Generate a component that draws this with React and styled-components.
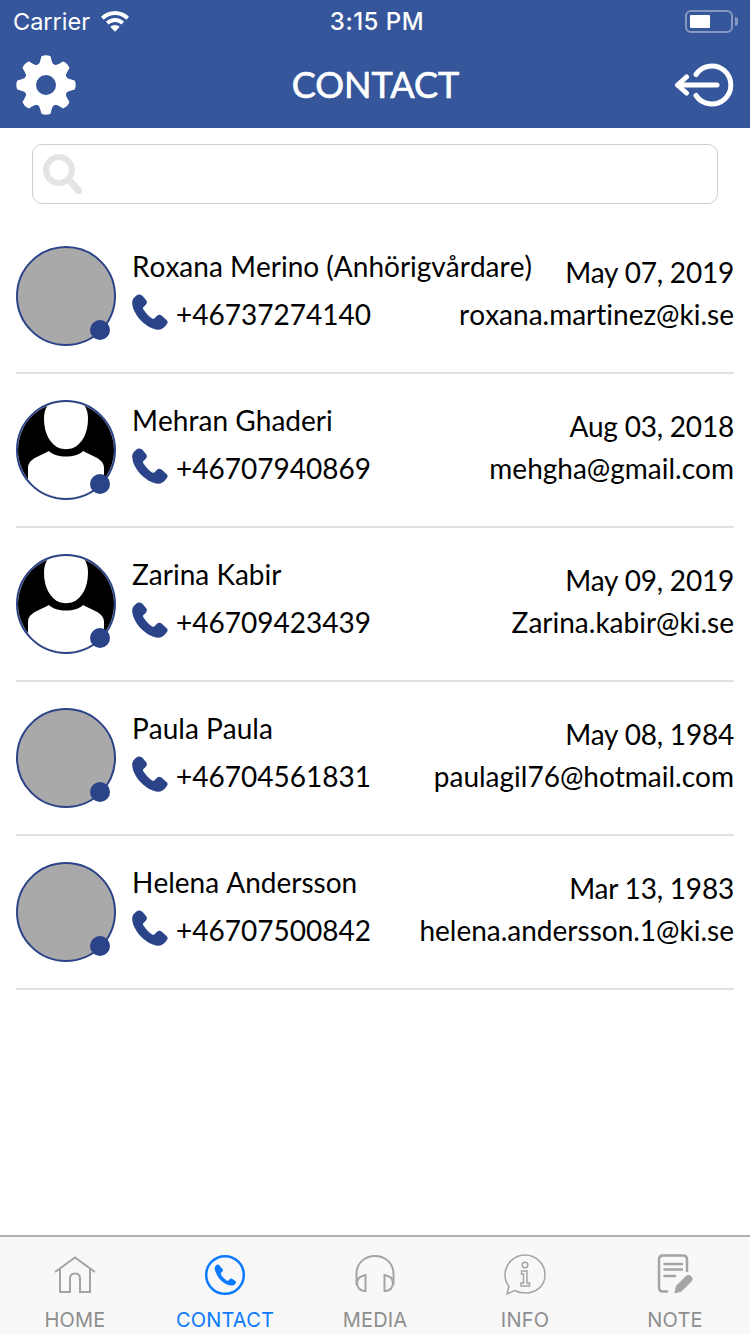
import React from 'react'
import styled, { createGlobalStyle } from 'styled-components'

const GlobalStyle = createGlobalStyle`
  html, body { margin: 0; padding: 0; background: #fff; }
  * { box-sizing: border-box; }
`

const Page = styled.div`
  width: 750px;
  height: 1334px;
  display: flex;
  flex-direction: column;
  font-family: Lato, "Liberation Sans", sans-serif;
  font-variant-ligatures: none;
  color: #000;
  overflow: hidden;
`

const TopArea = styled.header`
  background: #35569b;
  height: 128px;
  color: #fff;
  flex: none;
`

const StatusBar = styled.div`
  height: 42px;
  display: grid;
  grid-template-columns: 1fr auto 1fr;
  align-items: center;
  padding: 0 12px 0 13px;
  font-family: Inter, "Liberation Sans", sans-serif;
  font-size: 23.5px;
  font-weight: 400;
`

const Carrier = styled.div`
  display: flex;
  align-items: center;
  gap: 10px;
`

const Clock = styled.div`
  font-size: 24px;
  font-weight: 500;
  letter-spacing: 0.5px;
  margin-left: 3px;
`

const BatteryWrap = styled.div`
  justify-self: end;
  display: flex;
  align-items: center;
  gap: 2px;
`

const BatteryBody = styled.div`
  width: 48px;
  height: 23px;
  border: 2px solid rgba(255, 255, 255, 0.4);
  border-radius: 6px;
  padding: 3px;
`

const BatteryFill = styled.div`
  width: 20px;
  height: 100%;
  background: #fff;
  border-radius: 1px;
`

const BatteryTip = styled.div`
  width: 3px;
  height: 9px;
  background: rgba(255, 255, 255, 0.4);
  border-radius: 0 3px 3px 0;
`

const NavBar = styled.div`
  height: 86px;
  display: flex;
  align-items: center;
  justify-content: space-between;
  padding: 2px 14px 2px 15px;
`

const Title = styled.h1`
  margin: 0 0 2px;
  font-size: 36px;
  font-weight: 400;
  line-height: 40px;
  -webkit-text-stroke: 0.7px #fff;
`

const SearchBox = styled.div`
  flex: none;
  height: 60px;
  margin: 16px 32px 16px;
  border: 1px solid #cfcfcf;
  border-radius: 10px;
  display: flex;
  align-items: center;
  padding: 0 9px;
`

const List = styled.main`
  flex: 1;
  padding: 0 16px;
`

const Row = styled.div`
  height: 154px;
  border-bottom: 2px solid #e2e2e2;
  display: flex;
  align-items: flex-start;
  padding-top: 26px;
`

const AvatarWrap = styled.div`
  position: relative;
  width: 100px;
  height: 100px;
  flex: none;
`

const Avatar = styled.div`
  width: 100px;
  height: 100px;
  border-radius: 50%;
  border: 2px solid #2a4389;
  background: ${p => (p.$photo ? '#fff' : '#a9a9a9')};
  overflow: hidden;
`

const Dot = styled.span`
  position: absolute;
  right: 6px;
  bottom: 6px;
  width: 20px;
  height: 20px;
  border-radius: 50%;
  background: #2a4389;
`

const Info = styled.div`
  flex: 1;
  margin-left: 16px;
  margin-top: -3px;
  display: flex;
  flex-direction: column;
  gap: 5px;
`

const Line = styled.div`
  display: flex;
  justify-content: space-between;
  align-items: center;
  font-size: 28px;
  line-height: 34px;
  font-kerning: none;
  white-space: nowrap;
`

const DateText = styled.span`
  margin-top: 12px;
  font-kerning: normal;
  letter-spacing: -0.2px;
`

const Phone = styled.span`
  display: flex;
  align-items: center;
  gap: 8px;

  svg {
    margin-bottom: 3px;
  }
`

const TabBar = styled.nav`
  flex: none;
  height: 99px;
  background: #f8f8f8;
  border-top: 2px solid #b2b2b2;
  display: grid;
  grid-template-columns: repeat(5, 1fr);
`

const Tab = styled.div`
  display: flex;
  flex-direction: column;
  align-items: center;
  padding-top: 16px;
  color: ${p => (p.$active ? '#0a7aff' : '#8e8e8e')};
  font-family: Inter, "Liberation Sans", sans-serif;
  font-size: 20px;
  letter-spacing: 0.2px;
  line-height: 24px;
`

const TabIcon = styled.div`
  width: 44px;
  height: 44px;
  margin-bottom: 11px;
  display: flex;
  align-items: center;
  justify-content: center;
`

const WifiIcon = () => (
  <svg width="30" height="24" viewBox="0 0 30 24" fill="#fff">
    <path d="M15 2C20.400 2 25.300 4.200 29 7.800L26.300 10.700C23.300 7.800 19.400 6 15 6S6.700 7.800 3.700 10.700L1 7.800C4.700 4.200 9.600 2 15 2Z" />
    <path d="M15 9C18.500 9 21.700 10.400 24.100 12.700L21.300 15.600C19.600 14 17.400 13 15 13S10.400 14 8.700 15.600L5.900 12.700C8.300 10.400 11.500 9 15 9Z" />
    <path d="M15 16C16.800 16 18.400 16.700 19.600 17.900L15 22.800L10.400 17.900C11.600 16.700 13.200 16 15 16Z" />
  </svg>
)

const gearTeeth = [0, 45, 90, 135, 180, 225, 270, 315]

const GearIcon = () => (
  <svg width="62" height="62" viewBox="0 0 62 62" fill="#fff">
    <circle cx="31" cy="31" r="16" fill="none" stroke="#fff" strokeWidth="12" />
    {gearTeeth.map(deg => (
      <path
        key={deg}
        transform={`rotate(${deg} 31 31)`}
        d="M22 12C25 10.500 25.800 4 26.500 2.300Q31 0.300 35.500 2.300C36.200 4 37 10.500 40 12Z"
      />
    ))}
  </svg>
)

const LogoutIcon = () => (
  <svg width="62" height="46" viewBox="0 0 62 46" fill="none" stroke="#fff" strokeLinecap="round" strokeLinejoin="round" strokeWidth="5">
    <path d="M22 12.500A19 19 0 1 1 22 33.500" />
    <path d="M4 23H43" />
    <path d="M12.500 15L3.500 23L12.500 31" />
  </svg>
)

const SearchIcon = () => (
  <svg width="40" height="40" viewBox="0 0 40 40" fill="none" stroke="#e4e4e4" strokeLinecap="round">
    <circle cx="17" cy="16" r="13" strokeWidth="6" />
    <path d="M27 26L37 37" strokeWidth="7" />
  </svg>
)

const CallIcon = () => (
  <svg width="36" height="36" viewBox="0 0 36 36">
    <path
      fill="#2a4389"
      d="M8.500 0.800C7 0.300 5.500 0.800 4.200 1.800C1.600 3.800 0 6 0.200 9.200C0.700 15.500 4.300 21.500 8.700 26.300C13.200 31 19 35 25.500 35.700C29 36 31.500 34 33.800 31.500C35.300 30 36.300 28 35 26.500L29.200 21.300C27.800 20.300 26.300 20.500 25 21.800L22.300 24.400C21.600 25 20.800 25 20 24.500C16.500 22 13.500 18.800 11.300 15.200C10.800 14.400 10.800 13.600 11.500 13L13.800 10.700C15 9.400 15.200 8 14.400 6.500L10.400 1.800C9.900 1.300 9.200 1 8.500 0.800Z"
    />
  </svg>
)

const PersonSilhouette = () => (
  <svg width="96" height="96" viewBox="0 0 96 96">
    <rect width="96" height="96" fill="#000" />
    <path
      fill="#fff"
      d="M48 -3C33 -3 26 3 26 17C26 31 32 42 41 46C45 47.500 51 47.500 55 46C64 42 70 31 70 17C70 3 63 -3 48 -3Z"
    />
    <path
      fill="#fff"
      d="M10 96V66C10 59 16 56 25 52L31 49C35 53 41 54.500 48 54.500C55 54.500 61 53 65 49L71 52C80 56 86 59 86 66V96Z"
    />
  </svg>
)

const HomeIcon = () => (
  <svg width="42" height="38" viewBox="0 0 42 38" fill="none" stroke="#a4a4a4" strokeWidth="2">
    <path d="M1 16L21 1.500L41 16" />
    <path d="M6 13V36H16V22.500C16 19.500 18 17.500 21 17.500C24 17.500 26 19.500 26 22.500V36H36V13" />
  </svg>
)

const ContactTabIcon = () => (
  <svg width="42" height="42" viewBox="0 0 42 42">
    <circle cx="21" cy="21" r="18.800" fill="none" stroke="#0a7aff" strokeWidth="2.500" />
    <path
      fill="#0a7aff"
      d="M14.500 10.500C13.500 10.200 12.500 10.700 11.800 11.500C10.800 12.700 10.500 14 10.800 15.500C11.700 19.500 14 23.500 17 26.500C20 29.500 24.500 31.500 28 31.500C29.500 31.500 31 30.500 31.800 29.200C32.300 28.300 32 27.500 31.300 27L28 24.800C27.200 24.300 26.300 24.500 25.700 25.200L24.500 26.500C24 27 23.300 27 22.700 26.600C20.500 25.100 18.400 22.800 17 20.500C16.600 19.800 16.800 19.100 17.300 18.600L18.400 17.500C19 16.900 19.100 16 18.700 15.300Z"
    />
  </svg>
)

const HeadphonesIcon = () => (
  <svg width="42" height="42" viewBox="0 0 42 42" fill="none" stroke="#a4a4a4" strokeWidth="2">
    <path d="M2.500 31V20C2.500 9 11 2 21 2C31 2 39.500 9 39.500 20V31" />
    <path d="M11.500 21V37H10C6 37 3 33 3 29C3 25 6 22 11.500 21Z" />
    <path d="M30.500 21V37H32C36 37 39 33 39 29C39 25 36 22 30.500 21Z" />
  </svg>
)

const InfoIcon = () => (
  <svg width="42" height="42" viewBox="0 0 42 42" fill="none" stroke="#a4a4a4" strokeWidth="1.500">
    <path d="M3 40L5 32.500C2.500 29.500 1 25.500 1 21C1 10 10 1 21 1C32 1 41 10 41 21C41 32 32 39 21 39C17 39 13.500 38.200 10.500 36.500Z" />
    <circle cx="21" cy="11" r="2.800" />
    <path d="M17.500 17H23V29H25.500V32H17V29H19.500V20H17.500Z" />
  </svg>
)

const NoteIcon = () => (
  <svg width="42" height="42" viewBox="0 0 42 42" fill="none" stroke="#a4a4a4" strokeLinecap="round">
    <path d="M33 17V5.500C33 2.800 31.500 1.500 29 1.500H9C6.500 1.500 5 2.800 5 5.500V33.500C5 36 6.500 37.500 9 37.500H13" strokeWidth="2.500" />
    <path d="M10.500 10H28M10.500 15.500H28M10.500 22H21" strokeWidth="2.500" />
    <path d="M21 38.500L22.500 32L32 22.500C33.500 21 35.500 21 37 22.500C38.500 24 38.500 26 37 27.500L27.500 37Z" fill="#a4a4a4" strokeWidth="1" />
  </svg>
)

const contacts = [
  { name: 'Roxana Merino (Anhörigvårdare)', date: 'May 07, 2019', phone: '+46737274140', email: 'roxana.martinez@ki.se' },
  { name: 'Mehran Ghaderi', date: 'Aug 03, 2018', phone: '+46707940869', email: 'mehgha@gmail.com', photo: true },
  { name: 'Zarina Kabir', date: 'May 09, 2019', phone: '+46709423439', email: 'Zarina.kabir@ki.se', photo: true },
  { name: 'Paula Paula', date: 'May 08, 1984', phone: '+46704561831', email: 'paulagil76@hotmail.com' },
  { name: 'Helena Andersson', date: 'Mar 13, 1983', phone: '+46707500842', email: 'helena.andersson.1@ki.se' },
]

const tabs = [
  { label: 'HOME', icon: <HomeIcon /> },
  { label: 'CONTACT', icon: <ContactTabIcon />, active: true },
  { label: 'MEDIA', icon: <HeadphonesIcon /> },
  { label: 'INFO', icon: <InfoIcon /> },
  { label: 'NOTE', icon: <NoteIcon /> },
]

const App = () => (
  <Page>
    <GlobalStyle />
    <TopArea>
      <StatusBar>
        <Carrier>
          Carrier
          <WifiIcon />
        </Carrier>
        <Clock>3:15 PM</Clock>
        <BatteryWrap>
          <BatteryBody>
            <BatteryFill />
          </BatteryBody>
          <BatteryTip />
        </BatteryWrap>
      </StatusBar>
      <NavBar>
        <GearIcon />
        <Title>CONTACT</Title>
        <LogoutIcon />
      </NavBar>
    </TopArea>
    <SearchBox>
      <SearchIcon />
    </SearchBox>
    <List>
      {contacts.map(c => (
        <Row key={c.phone}>
          <AvatarWrap>
            <Avatar $photo={c.photo}>{c.photo && <PersonSilhouette />}</Avatar>
            <Dot />
          </AvatarWrap>
          <Info>
            <Line>
              <span>{c.name}</span>
              <DateText>{c.date}</DateText>
            </Line>
            <Line>
              <Phone>
                <CallIcon />
                {c.phone}
              </Phone>
              <span>{c.email}</span>
            </Line>
          </Info>
        </Row>
      ))}
    </List>
    <TabBar>
      {tabs.map(t => (
        <Tab key={t.label} $active={t.active}>
          <TabIcon>{t.icon}</TabIcon>
          {t.label}
        </Tab>
      ))}
    </TabBar>
  </Page>
)

export default App
